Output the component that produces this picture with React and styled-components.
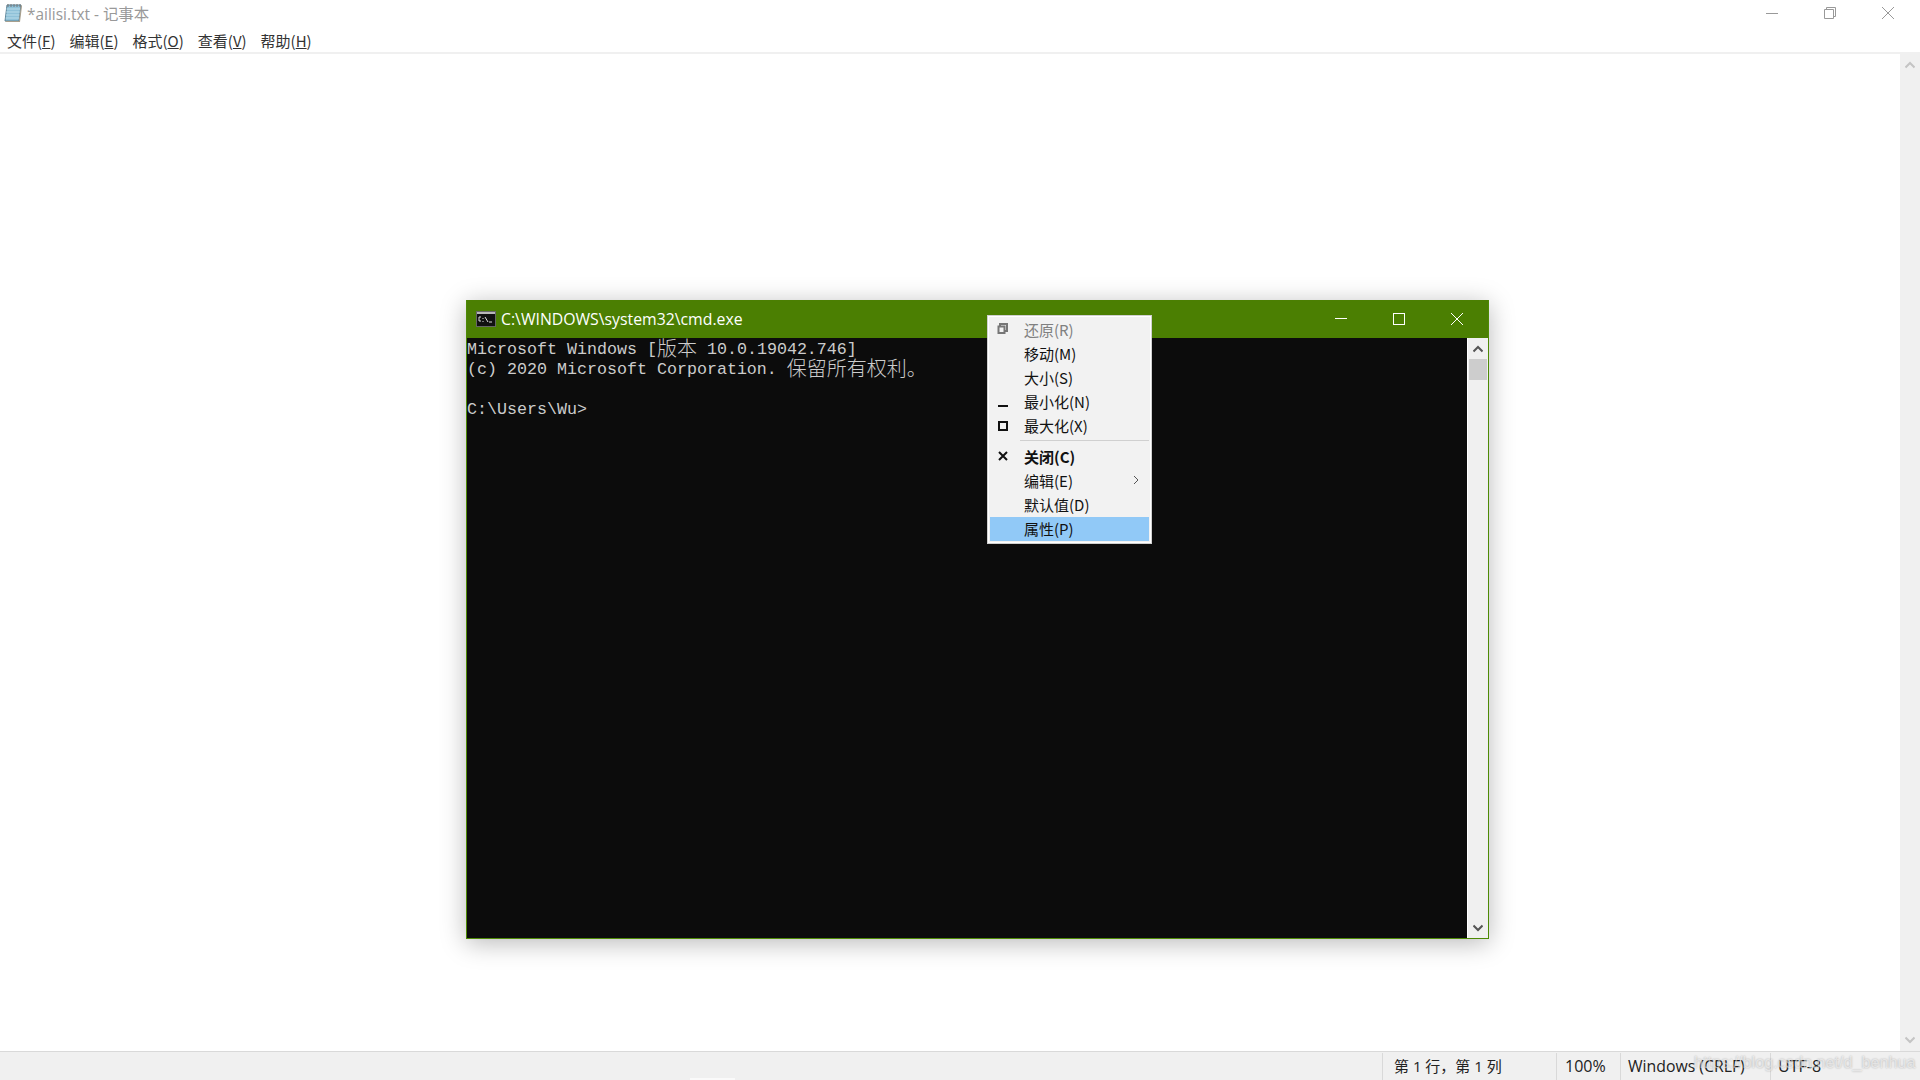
import React from 'react'
import styled, {createGlobalStyle} from 'styled-components'

const UI_FONT = `"Open Sans", "Noto Sans CJK SC", sans-serif`
const CJK_FONT = `"Noto Sans CJK SC", sans-serif`

const Chevron = ({dir, color}) => (
    <svg width="10" height="8" viewBox="0 0 10 8">
        <path
            d={dir === 'up' ? 'M0.5 6.5 L5 2 L9.5 6.5' : 'M0.5 1.5 L5 6 L9.5 1.5'}
            fill="none"
            stroke={color}
            strokeWidth="2"
        />
    </svg>
)

const NotepadIcon = () => (
    <svg width="20" height="20" viewBox="0 0 20 20">
        <path d="M4 2 H18 L16 18 H2 Z" fill="#8fc1d8" stroke="#5b8296" strokeWidth="1" />
        <path d="M3.4 6 H17 M3.2 9 H16.7 M2.9 12 H16.4 M2.6 15 H16.1" stroke="#b9dcea" strokeWidth="1" />
        <path d="M16 18 L18 2 L19 3 L17 19 H3 L2 18 Z" fill="#a89f8d" />
        <path d="M5 1 V4 M8 1 V4 M11 1 V4 M14 1 V4 M17 1 V4" stroke="#777" strokeWidth="1" />
    </svg>
)

const CmdIcon = () => (
    <svg width="20" height="16" viewBox="0 0 20 16">
        <rect x="0.5" y="0.5" width="19" height="15" fill="#b8b8b8" stroke="#666" />
        <rect x="1" y="3" width="18" height="12" fill="#111" />
        <path d="M3 6 H5 M3 10 H5 M3 6 V10 M7 7 V8 M7 10 V11 M9 6 L12 11 M13 11 H16" stroke="#ddd" strokeWidth="1" fill="none" />
    </svg>
)

const MENU = [
    {name: '文件', key: 'F'},
    {name: '编辑', key: 'E'},
    {name: '格式', key: 'O'},
    {name: '查看', key: 'V'},
    {name: '帮助', key: 'H'},
]

const App = () => {
    return (
        <Page>
            <GlobalStyle />
            <TitleBar>
                <NotepadIcon />
                <TitleText>*ailisi.txt - 记事本</TitleText>
                <Caption>
                    <CaptionButton>
                        <svg width="12" height="12" viewBox="0 0 12 12"><path d="M0 6.5 H12" stroke="#999" /></svg>
                    </CaptionButton>
                    <CaptionButton>
                        <svg width="12" height="12" viewBox="0 0 12 12"><path d="M0.5 2.5 H9.5 V11.5 H0.5 Z M2.5 2.5 V0.5 H11.5 V9.5 H9.5" fill="none" stroke="#999" /></svg>
                    </CaptionButton>
                    <CaptionButton>
                        <svg width="12" height="12" viewBox="0 0 12 12"><path d="M0 0 L12 12 M12 0 L0 12" stroke="#999" /></svg>
                    </CaptionButton>
                </Caption>
            </TitleBar>
            <MenuBar>
                {MENU.map(item => (
                    <MenuItem key={item.key}>{item.name}(<u>{item.key}</u>)</MenuItem>
                ))}
            </MenuBar>
            <EditorArea>
                <Editor />
                <PageScrollbar>
                    <Chevron dir="up" color="#c4c4c4" />
                    <Chevron dir="down" color="#c4c4c4" />
                </PageScrollbar>
            </EditorArea>
            <StatusBar>
                <StatusCell width={174} pad={11} size={15}>第 1 行，第 1 列</StatusCell>
                <StatusCell width={64} pad={8} size={16}>100%</StatusCell>
                <StatusCell width={150} pad={7} size={15.8}>Windows (CRLF)</StatusCell>
                <StatusCell width={150} pad={7} size={16}>UTF-8</StatusCell>
                <Watermark>https://blog.csdn.net/d_benhua</Watermark>
            </StatusBar>
            <BottomNotch />

            <CmdWindow>
                <CmdTitle>
                    <CmdIcon />
                    <CmdTitleText>C:\WINDOWS\system32\cmd.exe</CmdTitleText>
                    <CmdCaption>
                        <CmdCaptionButton>
                            <svg width="12" height="12" viewBox="0 0 12 12"><path d="M0 5.5 H12" stroke="#fff" /></svg>
                        </CmdCaptionButton>
                        <CmdCaptionButton>
                            <svg width="12" height="12" viewBox="0 0 12 12"><rect x="0.5" y="0.5" width="11" height="11" fill="none" stroke="#fff" /></svg>
                        </CmdCaptionButton>
                        <CmdCaptionButton>
                            <svg width="12" height="12" viewBox="0 0 12 12"><path d="M0 0 L12 12 M12 0 L0 12" stroke="#fff" /></svg>
                        </CmdCaptionButton>
                    </CmdCaption>
                </CmdTitle>
                <CmdBody>
                    <Console>
                        <ConsoleLine>Microsoft Windows [<Cjk>版本</Cjk> 10.0.19042.746]</ConsoleLine>
                        <ConsoleLine>(c) 2020 Microsoft Corporation. <Cjk>保留所有权利。</Cjk></ConsoleLine>
                        <ConsoleLine>&nbsp;</ConsoleLine>
                        <ConsoleLine>C:\Users\Wu&gt;</ConsoleLine>
                    </Console>
                    <CmdScrollbar>
                        <ArrowCell><Chevron dir="up" color="#555" /></ArrowCell>
                        <Thumb />
                        <ScrollTrack />
                        <ArrowCell><Chevron dir="down" color="#555" /></ArrowCell>
                    </CmdScrollbar>
                </CmdBody>
                <SystemMenu>
                    <SystemItem disabled>
                        <ItemIcon>
                            <svg width="12" height="12" viewBox="0 0 12 12"><path d="M3 3 V1 H10 V8 H8 M1.5 3.5 H7.5 V10 H1.5 Z" fill="none" stroke="#777" strokeWidth="2" /></svg>
                        </ItemIcon>
                        还原(R)
                    </SystemItem>
                    <SystemItem><ItemIcon />移动(M)</SystemItem>
                    <SystemItem><ItemIcon />大小(S)</SystemItem>
                    <SystemItem>
                        <ItemIcon>
                            <svg width="12" height="12" viewBox="0 0 12 12"><path d="M1 10 H11" stroke="#111" strokeWidth="2" /></svg>
                        </ItemIcon>
                        最小化(N)
                    </SystemItem>
                    <SystemItem>
                        <ItemIcon>
                            <svg width="12" height="12" viewBox="0 0 12 12"><rect x="2" y="2" width="8" height="8" fill="none" stroke="#111" strokeWidth="2" /></svg>
                        </ItemIcon>
                        最大化(X)
                    </SystemItem>
                    <MenuSeparator />
                    <SystemItem bold>
                        <ItemIcon>
                            <svg width="12" height="12" viewBox="0 0 12 12"><path d="M2 2 L10 10 M10 2 L2 10" stroke="#111" strokeWidth="2" /></svg>
                        </ItemIcon>
                        关闭(C)
                    </SystemItem>
                    <SystemItem>
                        <ItemIcon />
                        编辑(E)
                        <SubArrow>
                            <svg width="6" height="10" viewBox="0 0 6 10"><path d="M1 1 L5 5 L1 9" fill="none" stroke="#555" /></svg>
                        </SubArrow>
                    </SystemItem>
                    <SystemItem><ItemIcon />默认值(D)</SystemItem>
                    <SystemItem active><ItemIcon />属性(P)</SystemItem>
                </SystemMenu>
            </CmdWindow>
        </Page>
    )
}

const GlobalStyle = createGlobalStyle`
    html, body {
        margin: 0;
        padding: 0;
        background: #fff;
        overflow: hidden;
    }
`

const Page = styled.div`
    position: relative;
    width: 1920px;
    height: 1080px;
    display: flex;
    flex-direction: column;
    font-family: ${UI_FONT};
    overflow: hidden;
`

const TitleBar = styled.div`
    height: 30px;
    display: flex;
    align-items: center;
    padding: 0 0 4px 3px;
    box-sizing: border-box;
`

const TitleText = styled.span`
    margin-left: 4px;
    font-size: 15.4px;
    color: #999;
`

const Caption = styled.div`
    margin-left: auto;
    display: flex;
    padding-right: 3px;
`

const CaptionButton = styled.div`
    width: 58px;
    display: flex;
    justify-content: center;
`

const MenuBar = styled.div`
    display: flex;
    gap: 14px;
    padding: 0 0 2px 7px;
    box-sizing: content-box;
    height: 20px;
    align-items: center;
    color: #333;
    border-bottom: 2px solid #f0f0f0;
`

const MenuItem = styled.span`
    font-family: ${CJK_FONT};
    font-size: 15px;
    white-space: nowrap;
`

const EditorArea = styled.div`
    flex: 1;
    display: flex;
    min-height: 0;
`

const Editor = styled.div`
    flex: 1;
    background: #fff;
`

const PageScrollbar = styled.div`
    width: 20px;
    background: #f0f0f0;
    display: flex;
    flex-direction: column;
    align-items: center;
    justify-content: space-between;
    padding: 7px 0;
    box-sizing: border-box;
`

const StatusBar = styled.div`
    position: relative;
    height: 28px;
    display: flex;
    justify-content: flex-end;
    background: #f0f0f0;
    border-top: 1px solid #d9d9d9;
    box-sizing: content-box;
`

const StatusCell = styled.div`
    width: ${props => props.width}px;
    padding-left: ${props => props.pad}px;
    box-sizing: border-box;
    border-left: 1px solid #d9d9d9;
    margin-top: 1px;
    font-family: ${UI_FONT};
    font-size: ${props => props.size}px;
    line-height: 27px;
    color: #222;
    white-space: nowrap;
`

const Watermark = styled.span`
    position: absolute;
    left: 1694px;
    top: 0;
    font-family: "Liberation Sans", sans-serif;
    font-size: 16.2px;
    line-height: 21px;
    color: rgba(255, 255, 255, 0.55);
    text-shadow: 0 0 2px rgba(0, 0, 0, 0.3);
    white-space: nowrap;
`

const BottomNotch = styled.div`
    position: absolute;
    left: 690px;
    bottom: 0;
    width: 45px;
    height: 2px;
    background: #fafafa;
`

const CmdWindow = styled.div`
    position: absolute;
    left: 466px;
    top: 300px;
    width: 1023px;
    height: 639px;
    box-sizing: border-box;
    display: flex;
    flex-direction: column;
    background: #0c0c0c;
    border: 1px solid #4e8a05;
    border-top: none;
    box-shadow: 0 4px 24px rgba(0, 0, 0, 0.28);
`

const CmdTitle = styled.div`
    height: 38px;
    flex-shrink: 0;
    display: flex;
    align-items: center;
    background: #4b7f02;
    padding-left: 9px;
`

const CmdTitleText = styled.span`
    margin-left: 5px;
    font-size: 15.8px;
    color: #fff;
    white-space: nowrap;
`

const CmdCaption = styled.div`
    margin-left: auto;
    display: flex;
    padding-right: 2px;
`

const CmdCaptionButton = styled.div`
    width: 58px;
    display: flex;
    justify-content: center;
`

const CmdBody = styled.div`
    flex: 1;
    display: flex;
    min-height: 0;
`

const Console = styled.div`
    flex: 1;
    padding-top: 2px;
    font-family: "Liberation Mono", monospace;
    font-size: 16.67px;
    line-height: 20px;
    color: #cccccc;
`

const ConsoleLine = styled.div`
    height: 20px;
    white-space: pre;
`

const Cjk = styled.span`
    font-family: ${CJK_FONT};
    font-size: 20px;
    line-height: 0;
    font-weight: 300;
    vertical-align: -2px;
`

const CmdScrollbar = styled.div`
    width: 21px;
    display: flex;
    flex-direction: column;
    background: #f0f0f0;
    border-left: 1px solid #fff;
    box-sizing: border-box;
`

const ArrowCell = styled.div`
    height: 21px;
    display: flex;
    align-items: center;
    justify-content: center;
`

const Thumb = styled.div`
    height: 21px;
    margin: 0 1px;
    background: #cdcdcd;
`

const ScrollTrack = styled.div`
    flex: 1;
`

const SystemMenu = styled.div`
    position: absolute;
    left: 520px;
    top: 15px;
    width: 165px;
    height: 229px;
    box-sizing: border-box;
    padding: 1px 2px;
    background: #f2f2f2;
    border: 1px solid #d0d0d0;
    box-shadow: inset 0 0 0 1px #fff;
`

const SystemItem = styled.div`
    position: relative;
    height: 24.2px;
    display: flex;
    align-items: center;
    font-family: ${CJK_FONT};
    font-size: 15px;
    font-weight: ${props => (props.bold ? 700 : 400)};
    color: ${props => (props.disabled ? '#808080' : '#111')};
    background: ${props => (props.active ? '#91c9f7' : 'transparent')};
    white-space: nowrap;
`

const ItemIcon = styled.span`
    width: 34px;
    display: flex;
    justify-content: center;
    padding-right: 8px;
    box-sizing: border-box;
    flex-shrink: 0;
`

const SubArrow = styled.span`
    margin-left: auto;
    margin-right: 10px;
    display: flex;
`

const MenuSeparator = styled.div`
    height: 1px;
    margin: 2px 0 3px 30px;
    background: #d0d0d0;
`

export default App
